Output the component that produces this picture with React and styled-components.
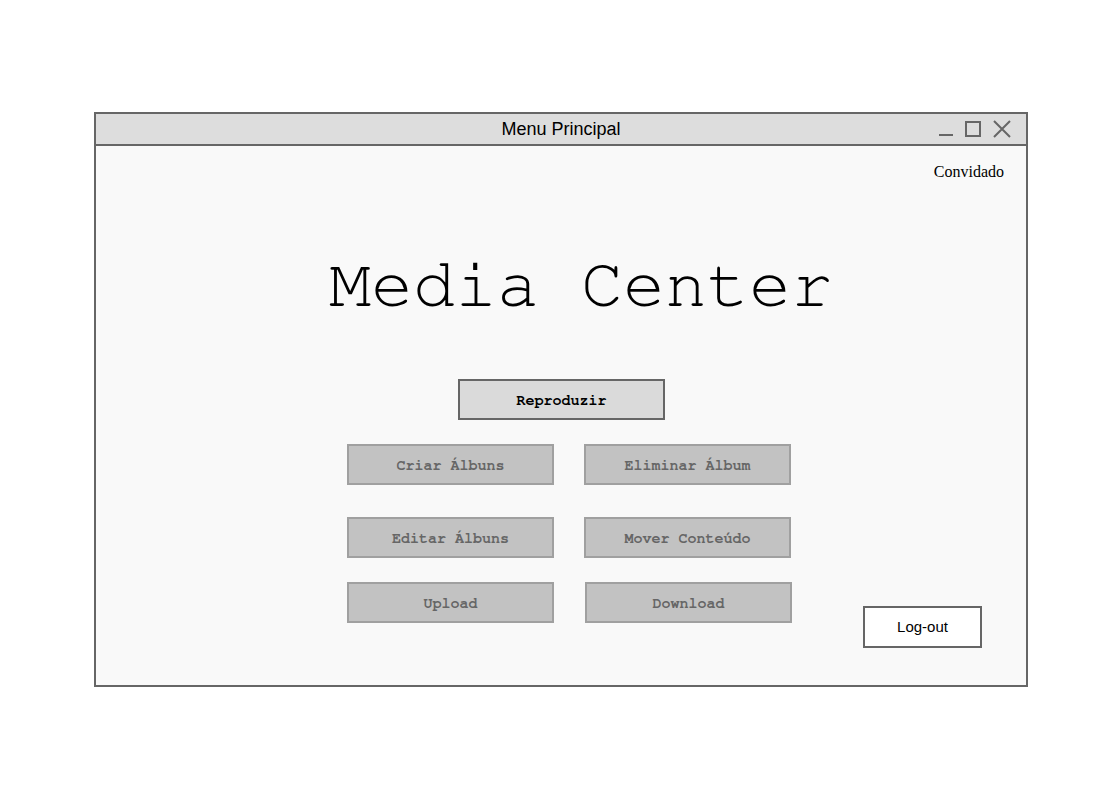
import styled, { createGlobalStyle } from "styled-components";

const GlobalStyle = createGlobalStyle`
body{
margin:0;
background:#ffffff;
font-family:"Liberation Sans", Arial, sans-serif;
}
`;

const mono = `"Nimbus Mono PS", "Nimbus Mono L", "FreeMono", "Courier New", "Liberation Mono", monospace`;

const Window = styled.div`
box-sizing:border-box;
width:934px;
margin:112px 0 0 94px;
border:2px solid #666666;
background:#f9f9f9;
display:flex;
flex-direction:column;
`;

const TitleBar = styled.div`
box-sizing:border-box;
height:32px;
background:#dddddd;
border-bottom:2px solid #666666;
display:grid;
grid-template-columns:1fr auto 1fr;
align-items:center;
padding:0 15px;
`;

const Title = styled.div`
grid-column:2;
padding-top:1px;
font-size:18px;
color:#000;
`;

const Controls = styled.div`
grid-column:3;
justify-self:end;
display:flex;
align-items:center;
gap:12px;
svg{
display:block;
}
`;

const Body = styled.div`
display:flex;
flex-direction:column;
padding:17px 22px 37px 0;
`;

const User = styled.div`
align-self:flex-end;
font-family:"Liberation Serif", "Times New Roman", serif;
font-size:16px;
color:#000;
`;

const Heading = styled.h1`
margin:69px 0 0 233px;
font-family:${mono};
font-weight:400;
font-size:70px;
color:#000;
white-space:pre;
`;

const Menu = styled.div`
display:flex;
flex-direction:column;
padding-left:251px;
margin-top:59px;
`;

const Row = styled.div`
display:flex;
align-items:flex-start;
gap:${(p) => p.$gap || 30}px;
margin-top:${(p) => p.$top || 0}px;
padding-left:${(p) => p.$indent || 0}px;
`;

const MenuButton = styled.button`
box-sizing:border-box;
width:207px;
height:41px;
padding:2px 0 0;
font-family:${mono};
font-weight:700;
font-size:15px;
background:${(p) => (p.$primary ? "#dadada" : "#c2c2c2")};
color:${(p) => (p.$primary ? "#000000" : "#666666")};
border:2px solid ${(p) => (p.$primary ? "#666666" : "#a0a0a0")};
`;

const LogoutButton = styled.button`
box-sizing:border-box;
width:119px;
height:42px;
margin:24px 0 0 40px;
padding:0 0 2px;
background:#ffffff;
border:2px solid #666666;
font-family:"Liberation Sans", Arial, sans-serif;
font-size:15px;
color:#000;
`;

const Minimize = () => (
  <svg width="14" height="16" viewBox="0 0 14 16">
    <line x1="0" y1="14" x2="14" y2="14" stroke="#666" strokeWidth="2" />
  </svg>
);

const Maximize = () => (
  <svg width="16" height="16" viewBox="0 0 16 16">
    <rect x="1" y="1" width="14" height="14" fill="none" stroke="#666" strokeWidth="2" />
  </svg>
);

const Close = () => (
  <svg width="18" height="18" viewBox="0 0 18 18">
    <path d="M1 1 L17 17 M17 1 L1 17" stroke="#666" strokeWidth="2" fill="none" />
  </svg>
);

export default function App() {
  return (
    <>
      <GlobalStyle />
      <Window>
        <TitleBar>
          <Title>Menu Principal</Title>
          <Controls>
            <Minimize />
            <Maximize />
            <Close />
          </Controls>
        </TitleBar>
        <Body>
          <User>Convidado</User>
          <Heading>Media Center</Heading>
          <Menu>
            <Row $indent={111}>
              <MenuButton $primary>Reproduzir</MenuButton>
            </Row>
            <Row $top={24}>
              <MenuButton>Criar Álbuns</MenuButton>
              <MenuButton>Eliminar Álbum</MenuButton>
            </Row>
            <Row $top={32}>
              <MenuButton>Editar Álbuns</MenuButton>
              <MenuButton>Mover Conteúdo</MenuButton>
            </Row>
            <Row $top={24} $gap={31}>
              <MenuButton>Upload</MenuButton>
              <MenuButton>Download</MenuButton>
              <LogoutButton>Log-out</LogoutButton>
            </Row>
          </Menu>
        </Body>
      </Window>
    </>
  );
}
